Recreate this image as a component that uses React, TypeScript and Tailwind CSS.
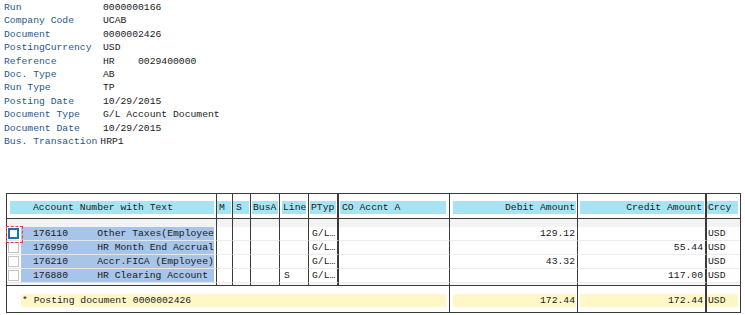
import React from 'react';

const fields: [string, string][] = [
  ['Run', '0000000166'],
  ['Company Code', 'UCAB'],
  ['Document', '0000002426'],
  ['PostingCurrency', 'USD'],
  ['Reference', 'HR    0029400000'],
  ['Doc. Type', 'AB'],
  ['Run Type', 'TP'],
  ['Posting Date', '10/29/2015'],
  ['Document Type', 'G/L Account Document'],
  ['Document Date', '10/29/2015'],
  ['Bus. Transaction', 'HRP1'],
];

const line = 'border-r border-r-[#3a3a3a]';
const thick = 'border-r-2 border-r-[#3a3a3a]';

const cols = [
  { h: 'Account Number with Text', b: line, hp: 'pl-[3px] pr-[2px]', tp: 'pl-[23px]', right: false },
  { h: 'M', b: line, hp: 'pr-[1px]', tp: 'pl-[2px]', right: false },
  { h: 'S', b: line, hp: 'pr-[1px]', tp: 'pl-[3px]', right: false },
  { h: 'BusA', b: line, hp: 'pl-[1px] pr-[1px]', tp: 'pl-[1px]', right: false },
  { h: 'Line', b: line, hp: 'pl-[2px] pr-[2px]', tp: 'pl-[1px]', right: false },
  { h: 'PTyp', b: thick, hp: 'pl-[1px] pr-[1px]', tp: 'pl-[1px]', right: false },
  { h: 'CO Accnt A', b: line, hp: 'pl-[1px] pr-[3px]', tp: 'pl-[2px]', right: false },
  { h: 'Debit Amount', b: line, hp: 'pl-[3px] pr-[1px]', tp: 'pr-[1px]', right: true },
  { h: 'Credit Amount', b: thick, hp: 'pl-[2px] pr-[1px]', tp: 'pr-[2px]', right: true },
  { h: 'Crcy', b: '', hp: 'pr-[2px]', tp: 'pl-[1px]', right: false },
];

const rows = [
  { acct: '176110     Other Taxes(Employee', line: '', debit: '129.12', credit: '' },
  { acct: '176990     HR Month End Accrual', line: '', debit: '', credit: '55.44' },
  { acct: '176210     Accr.FICA (Employee)', line: '', debit: '43.32', credit: '' },
  { acct: '176880     HR Clearing Account', line: 'S', debit: '', credit: '117.00' },
];

function Checkbox({ focused }: { focused: boolean }) {
  if (focused) {
    return (
      <span className="relative ml-[1px] w-[11px] h-[11px] shrink-0 bg-white border-2 border-[#1d6fb8]">
        {/* focus rectangle */}
        <span className="absolute -left-[4px] -top-[4px] w-[17px] h-[17px] border border-dashed border-[#e0483f]" />
      </span>
    );
  }
  return <span className="ml-[1px] w-[11px] h-[11px] shrink-0 bg-white border border-[#c4c4c4]" />;
}

export default function App() {
  return (
    <div className="w-[745px] h-[315px] overflow-hidden bg-white font-['Liberation_Mono','Courier_New',monospace] text-[9.72px] text-[#1a1a1a]">
      {/* header fields */}
      <div className="pt-[1px] pl-[4px]">
        {fields.map(([label, value]) => (
          <div key={label} className="flex h-[13.4px] leading-[13.4px] whitespace-pre">
            <span className={label === 'Bus. Transaction' ? 'text-[#1f5590] pr-[3px]' : 'text-[#1f5590] w-[99px] shrink-0'}>
              {label}
            </span>
            <span>{value}</span>
          </div>
        ))}
      </div>

      {/* ALV grid */}
      <div className="ml-[6px] mt-[44.6px] w-[735px] border border-[#3a3a3a]">
        <div className="grid grid-cols-[210px_16px_18px_29px_29px_30px_111px_128px_129px_33px]">
          {cols.map((c) => (
            <div key={c.h} className={`h-[25px] pt-[7px] pb-[4px] bg-white border-b border-b-[#3a3a3a] ${c.hp} ${c.b}`}>
              <div className={`h-[13px] leading-[13px] bg-[#a9e3f3] whitespace-pre overflow-hidden ${c.tp} ${c.right ? 'text-right' : ''}`}>
                {c.h}
              </div>
            </div>
          ))}

          {cols.map((c) => (
            <div key={'band' + c.h} className={`h-[8px] bg-[#f3f3f3] ${c.b}`} />
          ))}

          {rows.map((r, i) => (
            <React.Fragment key={r.acct}>
              <div className={`h-[14px] flex items-center border-b border-b-[#e6e6e6] bg-white ${line}`}>
                <Checkbox focused={i === 0} />
                <div className="ml-[2px] mr-[2px] flex-1 h-[13px] leading-[13px] bg-[#a7c4e9] pl-[12px] whitespace-pre overflow-hidden">
                  {r.acct}
                </div>
              </div>
              <div className={`h-[14px] bg-white border-b border-b-[#ececec] ${line}`} />
              <div className={`h-[14px] bg-white border-b border-b-[#ececec] ${line}`} />
              <div className={`h-[14px] bg-white border-b border-b-[#ececec] ${line}`} />
              <div className={`h-[14px] leading-[13px] pl-[4px] bg-white border-b border-b-[#ececec] ${line}`}>{r.line}</div>
              <div className={`h-[14px] leading-[13px] pl-[3px] bg-white border-b border-b-[#ececec] ${thick}`}>G/L…</div>
              <div className={`h-[14px] bg-white border-b border-b-[#ececec] ${line}`} />
              <div className={`h-[14px] leading-[13px] pr-[2px] text-right bg-white border-b border-b-[#ececec] ${line}`}>{r.debit}</div>
              <div className={`h-[14px] leading-[13px] pr-[2px] text-right bg-white border-b border-b-[#ececec] ${thick}`}>{r.credit}</div>
              <div className="h-[14px] leading-[13px] pl-[1px] bg-white border-b border-b-[#ececec]">USD</div>
            </React.Fragment>
          ))}

          {cols.map((c) => (
            <div key={'fill' + c.h} className={`h-[2px] bg-[#f7f7f7] ${c.b}`} />
          ))}
        </div>

        {/* totals */}
        <div className="grid grid-cols-[443px_128px_129px_33px] h-[27px] border-t border-t-[#3a3a3a]">
          <div className={`pt-[8px] pl-[14px] pr-[3px] ${line}`}>
            <div className="h-[13px] leading-[13px] bg-[#fff8c6] pl-[1px] whitespace-pre">* Posting document 0000002426</div>
          </div>
          <div className={`pt-[8px] pl-[3px] pr-[1px] ${line}`}>
            <div className="h-[13px] leading-[13px] bg-[#fff8c6] pr-[1px] text-right">172.44</div>
          </div>
          <div className={`pt-[8px] pl-[2px] pr-[1px] ${thick}`}>
            <div className="h-[13px] leading-[13px] bg-[#fff8c6] pr-[1px] text-right">172.44</div>
          </div>
          <div className="pt-[8px] pr-[2px]">
            <div className="h-[13px] leading-[13px] bg-[#fff8c6] pl-[1px]">USD</div>
          </div>
        </div>
      </div>
    </div>
  );
}
